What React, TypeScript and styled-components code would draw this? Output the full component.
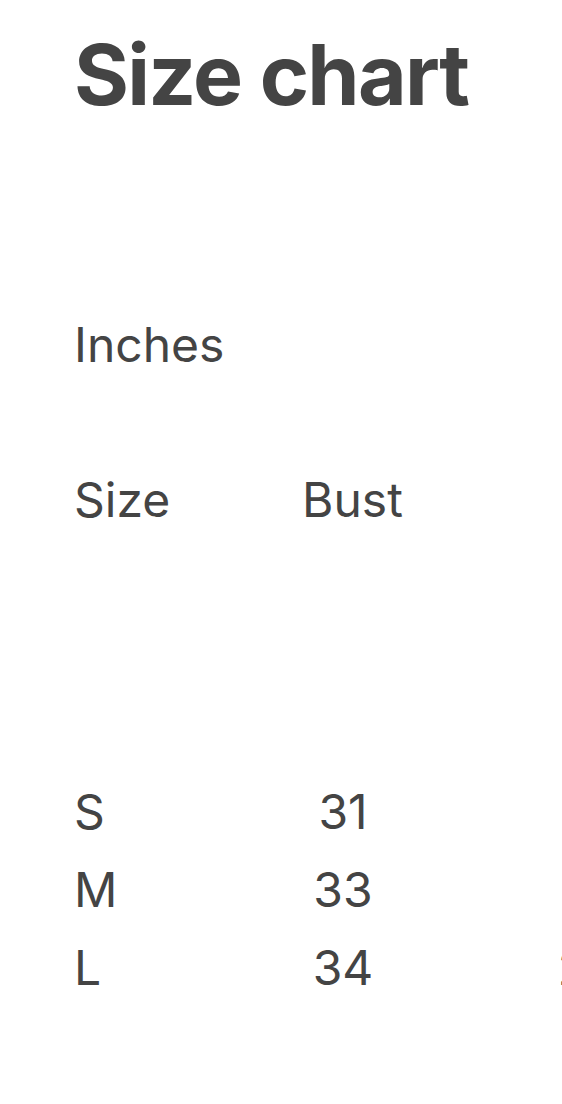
import { Fragment } from 'react';
import styled, { createGlobalStyle } from 'styled-components';

const GlobalStyle = createGlobalStyle`
  html,
  body {
    margin: 0;
    padding: 0;
    background: #ffffff;
    overflow: hidden;
  }
`;

const rows = [
  { size: 'S', bust: '31', waist: '26' },
  { size: 'M', bust: '33', waist: '27' },
  { size: 'L', bust: '34', waist: '28.5' },
];

const Page = styled.div`
  width: 562px;
  padding: 33px 0 0 74px;
  box-sizing: border-box;
  font-family: Inter, 'Noto Sans', 'Liberation Sans', sans-serif;
  color: #444444;
`;

const Title = styled.h1`
  margin: 0;
  font-size: 84px;
  line-height: 84px;
  font-weight: 700;
  letter-spacing: -1.7px;
`;

const Unit = styled.p`
  margin: 189px 0 0 0;
  font-size: 48px;
  line-height: 78px;
  font-weight: 400;
`;

const Table = styled.div`
  margin-top: 77px;
  display: grid;
  grid-template-columns: 228px 254px 200px;
  grid-template-rows: 312px repeat(${rows.length}, 78px);
  font-size: 48px;
  line-height: 78px;
  width: max-content;
`;

const HeadCell = styled.div<{ $align?: 'left' | 'center' }>`
  text-align: ${(p) => p.$align ?? 'left'};
  white-space: nowrap;
`;

const Cell = styled.div<{ $align?: 'left' | 'center' | 'right'; $padRight?: number }>`
  text-align: ${(p) => p.$align ?? 'left'};
  padding-right: ${(p) => p.$padRight ?? 0}px;
  white-space: nowrap;
`;

export default function App() {
  return (
    <>
      <GlobalStyle />
      <Page>
        <Title>Size chart</Title>
        <Unit>Inches</Unit>
        <Table>
          <HeadCell>Size</HeadCell>
          <HeadCell>Bust</HeadCell>
          <HeadCell $align="center">Waist</HeadCell>
          {rows.map((r) => (
            <Fragment key={r.size}>
              <Cell>{r.size}</Cell>
              <Cell $align="center" $padRight={172}>
                {r.bust}
              </Cell>
              <Cell $align="right" $padRight={98}>
                {r.waist}
              </Cell>
            </Fragment>
          ))}
        </Table>
      </Page>
    </>
  );
}
